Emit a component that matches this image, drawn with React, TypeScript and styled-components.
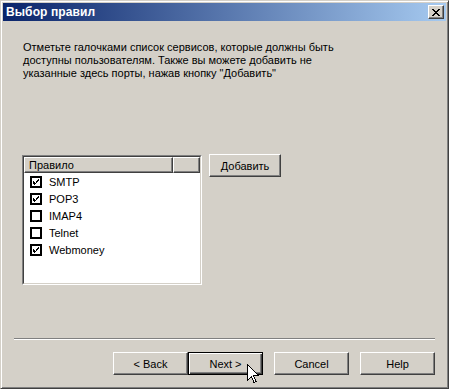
import React, { useState } from 'react';
import styled, { createGlobalStyle } from 'styled-components';

const GlobalStyle = createGlobalStyle`
  html, body {
    margin: 0;
    padding: 0;
    background: #d4d0c8;
  }
  body {
    font-family: "Liberation Sans", Arial, sans-serif;
    font-size: 11px;
    color: #000;
  }
`;

const Window = styled.div`
  position: relative;
  box-sizing: border-box;
  width: 449px;
  height: 389px;
  display: flex;
  flex-direction: column;
  padding: 2px;
  background: #d4d0c8;
  border: 1px solid;
  border-color: #d4d0c8 #404040 #404040 #d4d0c8;
  box-shadow: inset 1px 1px #fff, inset -1px -1px #808080;
`;

const TitleBar = styled.div`
  height: 18px;
  display: flex;
  align-items: center;
  justify-content: space-between;
  padding: 0 2px 0 2px;
  background: linear-gradient(to right, #0a246a, #a6caf0);
`;

const Title = styled.div`
  color: #fff;
  font-weight: bold;
  font-size: 12px;
  padding-left: 1px;
  letter-spacing: 0.1px;
`;

const CloseButton = styled.div`
  box-sizing: border-box;
  width: 16px;
  height: 14px;
  display: flex;
  align-items: center;
  justify-content: center;
  background: #d4d0c8;
  border: 1px solid;
  border-color: #fff #404040 #404040 #fff;
  box-shadow: inset -1px -1px #808080;
`;

const Body = styled.div`
  flex: 1;
  display: flex;
  flex-direction: column;
  padding: 20px 11px 11px 11px;
`;

const Content = styled.div`
  flex: 1;
  padding-left: 8px;
`;

const Intro = styled.p`
  margin: 0 0 0 1px;
  line-height: 13px;
  white-space: nowrap;
`;

const RulesRow = styled.div`
  display: flex;
  align-items: flex-start;
  gap: 7px;
  margin-top: 75px;
`;

const ListBox = styled.div`
  box-sizing: border-box;
  width: 180px;
  height: 130px;
  border: 1px solid;
  border-color: #808080 #fff #fff #808080;
  background: #fff;
`;

const ListInner = styled.div`
  box-sizing: border-box;
  height: 100%;
  border: 1px solid;
  border-color: #404040 #d4d0c8 #d4d0c8 #404040;
  overflow: hidden;
`;

const Header = styled.div`
  display: flex;
  height: 16px;
  background: #d4d0c8;
`;

const HeaderCell = styled.div<{ $width?: number }>`
  box-sizing: border-box;
  ${p => (p.$width ? `width: ${p.$width}px;` : 'flex: 1;')}
  height: 16px;
  line-height: 14px;
  padding-left: 4px;
  border: 1px solid;
  border-color: #fff #404040 #404040 #fff;
  box-shadow: inset -1px -1px #808080;
`;

const Row = styled.div`
  display: flex;
  align-items: center;
  height: 17px;
  padding-left: 6px;
  gap: 7px;
`;

const CheckBox = styled.div`
  box-sizing: border-box;
  width: 12px;
  height: 12px;
  border: 2px solid #000;
  background: #fff;
  display: flex;
  align-items: center;
  justify-content: center;
`;

const ButtonBase = styled.button<{ $default?: boolean }>`
  box-sizing: border-box;
  height: 23px;
  margin: 0;
  padding: 0;
  font-family: "Liberation Sans", Arial, sans-serif;
  font-size: 11px;
  color: #000;
  background: #d4d0c8;
  border: 1px solid;
  border-color: ${p => (p.$default ? '#000' : '#fff #404040 #404040 #fff')};
  box-shadow: ${p =>
    p.$default
      ? 'inset 1px 1px #fff, inset -1px -1px #404040, inset -2px -2px #808080'
      : 'inset -1px -1px #808080'};
`;

const AddButton = styled(ButtonBase)`
  width: 72px;
  margin-top: -1px;
`;

const Separator = styled.div`
  height: 1px;
  background: #808080;
  border-bottom: 1px solid #fff;
  margin-bottom: 12px;
`;

const Footer = styled.div`
  display: flex;
  justify-content: flex-end;
`;

const WizardButton = styled(ButtonBase)<{ $gap?: number }>`
  width: 75px;
  margin-left: ${p => p.$gap ?? 0}px;
`;

const Cursor = styled.svg`
  position: absolute;
  left: 246px;
  top: 363px;
  pointer-events: none;
`;

const rules = [
  { name: 'SMTP', on: true },
  { name: 'POP3', on: true },
  { name: 'IMAP4', on: false },
  { name: 'Telnet', on: false },
  { name: 'Webmoney', on: true },
];

const Check = () => (
  <svg width="8" height="8" viewBox="0 0 8 8" shapeRendering="crispEdges">
    <path
      d="M1 3h1v1h-1zM1 4h2v1h-2zM1 5h3v1h-3zM2 6h1v1h-1zM3 5h1v1h-1zM4 4h1v1h-1zM5 3h1v1h-1zM6 2h1v1h-1zM4 3h2v1h-2zM6 1h1v1h-1zM5 2h2v1h-2zM2 5h2v1h-2z"
      fill="#000"
    />
  </svg>
);

const App: React.FC = () => {
  const [items, setItems] = useState(rules);

  const toggle = (i: number) =>
    setItems(prev => prev.map((r, j) => (j === i ? { ...r, on: !r.on } : r)));

  return (
    <>
      <GlobalStyle />
      <Window>
        <TitleBar>
          <Title>Выбор правил</Title>
          <CloseButton>
            <svg width="8" height="7" viewBox="0 0 8 7" shapeRendering="crispEdges">
              <path
                d="M0 0h2v1h-2zM6 0h2v1h-2zM1 1h2v1h-2zM5 1h2v1h-2zM2 2h4v1h-4zM3 3h2v1h-2zM2 4h4v1h-4zM1 5h2v1h-2zM5 5h2v1h-2zM0 6h2v1h-2zM6 6h2v1h-2z"
                fill="#000"
              />
            </svg>
          </CloseButton>
        </TitleBar>
        <Body>
          <Content>
            <Intro>
              Отметьте галочками список сервисов, которые должны быть
              <br />
              доступны пользователям. Также вы можете добавить не
              <br />
              указанные здесь порты, нажав кнопку "Добавить"
            </Intro>
            <RulesRow>
              <ListBox>
                <ListInner>
                  <Header>
                    <HeaderCell $width={149}>Правило</HeaderCell>
                    <HeaderCell />
                  </Header>
                  {items.map((r, i) => (
                    <Row key={r.name} onClick={() => toggle(i)}>
                      <CheckBox>{r.on && <Check />}</CheckBox>
                      <span>{r.name}</span>
                    </Row>
                  ))}
                </ListInner>
              </ListBox>
              <AddButton>Добавить</AddButton>
            </RulesRow>
          </Content>
          <Separator />
          <Footer>
            <WizardButton>&lt; Back</WizardButton>
            <WizardButton $default>Next &gt;</WizardButton>
            <WizardButton $gap={11}>Cancel</WizardButton>
            <WizardButton $gap={11}>Help</WizardButton>
          </Footer>
        </Body>
        <Cursor width="12" height="20" viewBox="0 0 12 20" shapeRendering="crispEdges">
          <path
            d="M0.5 0.5 L0.5 16.5 L4.5 12.5 L7 18.5 L9 17.5 L6.5 11.5 L11.5 11.5 Z"
            fill="#fff"
            stroke="#000"
            strokeWidth="1"
          />
        </Cursor>
      </Window>
    </>
  );
};

export default App;
